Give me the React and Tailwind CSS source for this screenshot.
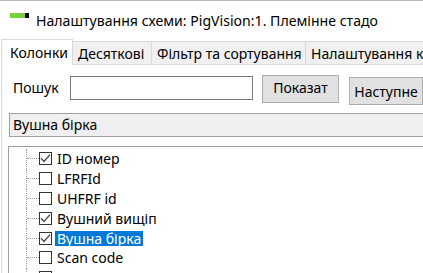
import React from 'react';

const tabs = [
  { label: 'Колонки', w: 'w-[72px]', active: true },
  { label: 'Десяткові', w: 'w-[79px]' },
  { label: 'Фільтр та сортування', w: 'w-[154px]' },
  { label: 'Налаштування колонок', w: 'w-[160px]' },
];

const columns = [
  { name: 'ID номер', checked: true },
  { name: 'LFRFId', checked: false },
  { name: 'UHFRF id', checked: false },
  { name: 'Вушний вищіп', checked: true },
  { name: 'Вушна бірка', checked: true, selected: true },
  { name: 'Scan code', checked: false },
  { name: 'Дата народження', checked: false },
];

const CheckBox = ({ checked }) => (
  <div className="w-[13px] h-[13px] shrink-0 border border-[#333333] bg-white flex items-center justify-center">
    {checked && (
      <svg width="11" height="11" viewBox="0 0 11 11">
        <path d="M1 5.2 L4 8.4 L10 1.6" fill="none" stroke="#4a4a4a" strokeWidth="1.4" />
      </svg>
    )}
  </div>
);

const App = () => {
  return (
    <div className="w-[423px] h-[273px] overflow-hidden bg-white font-['Noto_Sans',sans-serif] text-[14px] text-black">
      {/* Title bar */}
      <div className="h-[39px] border-t border-[#b9b9b9] flex items-start pl-[10px]">
        <div className="flex mt-[12px]">
          <div className="w-[15px] h-[5px] bg-[#78d23c]"></div>
          <div className="w-[4px] h-[5px] bg-black"></div>
        </div>
        <span className="ml-[7px] mt-[10px] leading-[20px] text-[14.1px] whitespace-nowrap">
          Налаштування схеми: PigVision:1. Племінне стадо
        </span>
      </div>

      <div className="ml-[1px]">
        {/* Tabs */}
        <div className="flex items-end h-[26px]">
          {tabs.map((t, i) =>
            t.active ? (
              <div key={i} className={`${t.w} shrink-0 h-[26px] bg-white border-t border-l border-r border-[#d9d9d9] flex items-center pl-[8px] pb-[1px] whitespace-nowrap relative z-10`}>
                {t.label}
              </div>
            ) : (
              <div key={i} className={`${t.w} shrink-0 h-[24px] bg-[#f0f0f0] border-t border-r border-b border-[#d9d9d9] flex items-center pl-[5px] whitespace-nowrap`}>
                {t.label}
              </div>
            )
          )}
        </div>

        {/* Tab page */}
        <div className="border-l border-[#d9d9d9] h-[220px] -mt-[1px] pt-[11px]">
          {/* Search row */}
          <div className="flex items-start">
            <span className="ml-[11px] mt-[3px] leading-[20px]">Пошук</span>
            <div className="ml-[11px] mt-[1px] w-[186px] h-[24px] border border-[#7a7a7a] bg-white"></div>
            <div className="ml-[9px] w-[77px] h-[28px] shrink-0 border border-[#adadad] bg-[#e1e1e1] flex items-center justify-center pb-[3px]">
              Показат
            </div>
            <div className="ml-[10px] mt-[2px] w-[74px] h-[28px] shrink-0 border border-[#adadad] bg-[#e1e1e1] flex items-center justify-center">
              Наступне
            </div>
          </div>

          {/* Combo */}
          <div className="ml-[7px] mt-[8px] w-[430px] h-[24px] border border-[#a0a0a0] bg-[#efefef] flex items-center pl-[3px] pb-[1px]">
            Вушна бірка
          </div>

          {/* Tree */}
          <div className="ml-[6px] mt-[9px] w-[430px] h-[140px] border-t border-l border-[#a0a0a0] pt-[2px]">
            {columns.map((c, i) => (
              <div key={i} className="flex items-center h-[19.8px]">
                <div className="w-[17px] shrink-0"></div>
                <div className="w-[13px] self-stretch shrink-0 border-l border-dotted border-[#a0a0a0] flex items-center">
                  <div className="w-full h-0 border-t border-dotted border-[#a0a0a0]"></div>
                </div>
                <CheckBox checked={c.checked} />
                <span
                  className={`ml-[3px] px-[2px] leading-[15px] whitespace-nowrap ${
                    c.selected ? 'bg-[#0078d7] text-white' : ''
                  }`}
                >
                  {c.name}
                </span>
              </div>
            ))}
          </div>
        </div>
      </div>
    </div>
  );
};

export default App;
